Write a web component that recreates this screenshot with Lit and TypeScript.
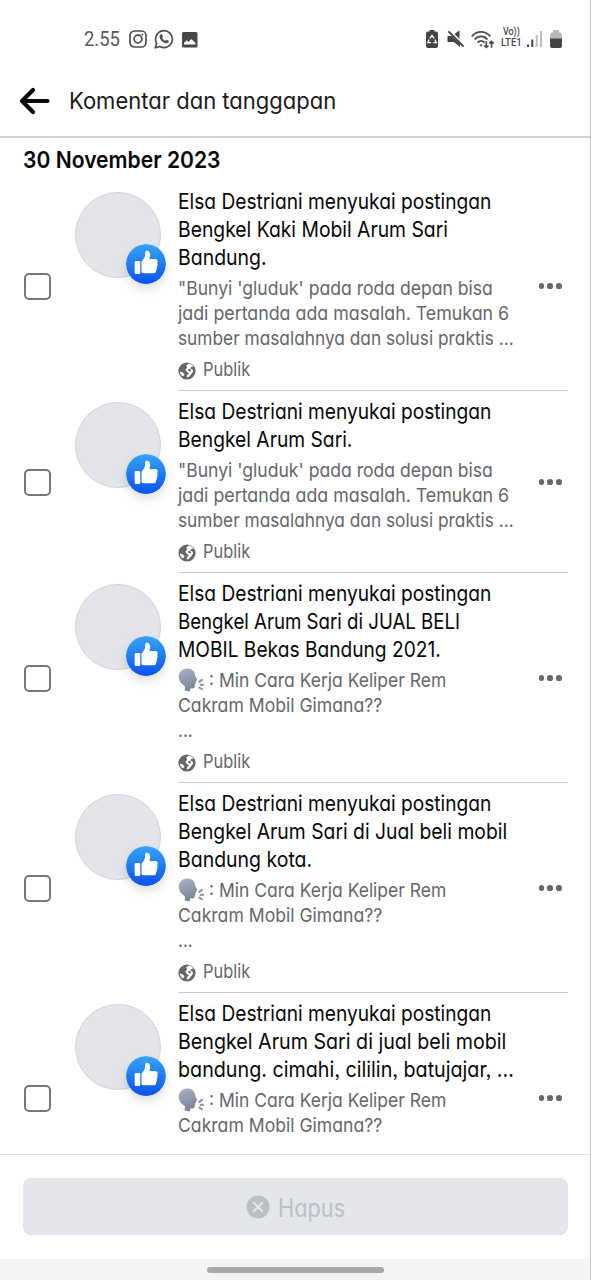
import { LitElement, html, css } from "lit";
import { customElement, property } from "lit/decorators.js";

/** A single line of text condensed horizontally to a given width. */
@customElement("fit-line")
class FitLine extends LitElement {
  @property({ type: Number }) w = 100;
  static styles = css`
    :host { display: block; white-space: nowrap; }
    .t { display: inline-block; transform-origin: 0 50%; white-space: pre; }
  `;
  updated() {
    const t = this.renderRoot.querySelector(".t") as HTMLElement;
    this.style.width = this.w + "px";
    t.style.transform = `scaleX(${this.w / t.offsetWidth})`;
  }
  render() {
    return html`<span class="t"><slot></slot></span>`;
  }
}

type Line = [string, number];
interface Activity { title: Line[]; body: Line[]; speaking?: boolean; privacy?: string; }

const FIRST: Line = ["Elsa Destriani menyukai postingan", 313.5];
const BUNYI: Line[] = [
  ["\"Bunyi 'gluduk' pada roda depan bisa", 315],
  ["jadi pertanda ada masalah. Temukan 6", 331],
  ["sumber masalahnya dan solusi praktis ...", 336],
];
const KELIPER: Line[] = [
  [": Min Cara Kerja Keliper Rem", 237],
  ["Cakram Mobil Gimana??", 204.5],
  ["...", 15],
];
const ITEMS: Activity[] = [
  { title: [FIRST, ["Bengkel Kaki Mobil Arum Sari", 269.5], ["Bandung.", 88.5]], body: BUNYI, privacy: "Publik" },
  { title: [FIRST, ["Bengkel Arum Sari.", 174]], body: BUNYI, privacy: "Publik" },
  { title: [FIRST, ["Bengkel Arum Sari di JUAL BELI", 282.5], ["MOBIL Bekas Bandung 2021.", 263]], body: KELIPER, speaking: true, privacy: "Publik" },
  { title: [FIRST, ["Bengkel Arum Sari di Jual beli mobil", 329.5], ["Bandung kota.", 134.5]], body: KELIPER, speaking: true, privacy: "Publik" },
  { title: [FIRST, ["Bengkel Arum Sari di jual beli mobil", 328], ["bandung. cimahi, cililin, batujajar, ...", 336]], body: KELIPER.slice(0, 2), speaking: true },
];

const head = html`<svg class="head" width="27" height="24" viewBox="0 0 27 24">
  <defs><linearGradient id="h" x1="0" y1="0" x2="0.3" y2="1"><stop offset="0" stop-color="#aab4c3"/><stop offset="1" stop-color="#79869b"/></linearGradient></defs>
  <path fill="url(#h)" d="M9 .5C14 .2 17.2 3.500 17.300 8l2 3.800c.3.7-.2 1.100-1.200 1.200v1.800l-1.300.8.8 1.200-.9.8c.2 1.800-.3 2.800-2 2.800l-2.200-.2-.8 3.300-5-.9.2-4.300C3 16 .8 12.800.7 8.800.7 4 4 .8 9 .5z"/>
  <path d="M21.300 13.900l2.500-1.900M22.700 16.900h2.300M21.300 19.600l2.700 1.500" stroke="#8d98a9" stroke-width="2.200" fill="none" stroke-linecap="round"/>
</svg>`;

const like = html`<svg class="like" width="40" height="40" viewBox="0 0 40 40">
  <defs><linearGradient id="g" x1="0" y1="0" x2="0" y2="1"><stop offset="0" stop-color="#35a4fa"/><stop offset="1" stop-color="#0a52ef"/></linearGradient></defs>
  <circle cx="20" cy="20" r="20" fill="url(#g)"/>
  <rect x="8.700" y="17" width="5.600" height="13" rx="1.300" fill="#fff"/>
  <path fill="#fff" d="M15.500 26.800V18.500c0-2.200 3.700-4 3.700-8.300V8.500c0-1.200.7-1.800 1.700-1.800 2.300 0 3.300 2 3.300 4.300 0 1.600-.5 3-.9 4h5.900c1.600 0 2.500 1 2.500 2.300 0 .9-.3 1.500-.6 1.900.4.4.6 1 .5 1.800-.1.900-.4 1.500-.8 1.800.2.500.2 1 .1 1.600-.1.800-.4 1.400-.8 1.600.1.300.1.700 0 1.200-.2 1.300-1.200 2.100-2.700 2.100h-8.400c-1.700 0-2.900-.2-3.500-1z"/>
</svg>`;

const globe = html`<svg width="18" height="18" viewBox="0 0 18 18">
  <circle cx="9" cy="9" r="8.600" fill="#65676b"/>
  <path fill="#fff" d="M8.200 3.300l3-1.700c2 .5 3.500 1.700 4.200 3l-2 .5-1.200 1.500 2.300.9.600 2-1.800 2.800-2.400 2.700-2.200.3.600-2.500 1.700-1.600-2-1.300-1.700-2.300 1.800-1.500-.300-1.300z"/>
  <path fill="#fff" d="M1.800 9.600l3 .8 1.600 1.700-.4 1.500-1.600.7C3 13 2 11.500 1.800 9.600z"/>
  <path fill="#65676b" d="M9.700 7.500l2.300-.6 1.300 1.300-1.100 1.400-1.700-.5z"/>
</svg>`;

@customElement("activity-row")
class ActivityRow extends LitElement {
  @property({ attribute: false }) item!: Activity;
  static styles = css`
    :host { display: flex; flex: none; box-sizing: border-box; padding: 0 22px 0 24px; }
    .check { align-self: center; flex: none; box-sizing: border-box; width: 27px; height: 27px; margin-top: 1px; border: 2px solid #75777a; border-radius: 5px; }
    .who { position: relative; flex: none; width: 86px; height: 86px; margin: 11px 17px 0 24px; }
    .avatar { box-sizing: border-box; width: 86px; height: 86px; border-radius: 50%; background: #e4e5ea; border: 1px solid #d2d3d7; }
    .like { position: absolute; left: 51px; top: 52px; border-radius: 50%; box-shadow: 0 5px 10px rgba(0, 0, 0, 0.13); }
    .main { flex: 1; display: flex; box-sizing: border-box; border-bottom: 1px solid #cbccce; padding: 5.500px 0 7.500px; }
    .cut { height: 210px; }
    .text { flex: 1; }
    .title { font-size: 22px; line-height: 28px; color: #080809; }
    .body { margin: 5.500px 0 7px; font-size: 19.200px; line-height: 25px; color: #65676b; }
    .row { display: flex; height: 25px; }
    .head { margin: 0 3.500px 0 0; }
    .privacy { display: flex; align-items: center; gap: 7px; font-size: 19px; line-height: 24.500px; color: #65676b; }
    .privacy svg { margin-top: 1px; }
    .dots { align-self: center; flex: none; display: flex; gap: 3.200px; padding-right: 6px; margin-top: 3px; }
    .dot { width: 5.700px; height: 5.700px; border-radius: 50%; background: #65676b; }
  `;
  render() {
    const { title, body, speaking, privacy } = this.item;
    return html`
      <div class="check"></div>
      <div class="who"><div class="avatar"></div>${like}</div>
      <div class="main ${privacy ? "" : "cut"}">
        <div class="text">
          <div class="title">${title.map(([t, w]) => html`<fit-line .w=${w}>${t}</fit-line>`)}</div>
          <div class="body">${body.map(([t, w], i) => html`<div class="row">${speaking && i === 0 ? head : ""}<fit-line .w=${w}>${t}</fit-line></div>`)}</div>
          ${privacy ? html`<div class="privacy">${globe}<fit-line .w=${47.5}>${privacy}</fit-line></div>` : ""}
        </div>
        <div class="dots"><div class="dot"></div><div class="dot"></div><div class="dot"></div></div>
      </div>`;
  }
}

@customElement("app-root")
class AppRoot extends LitElement {
  static styles = css`
    :host { display: flex; flex-direction: column; box-sizing: border-box; width: 591px; height: 1280px; overflow: hidden; background: #fff; border-right: 1px solid #c4c4c4; font-family: Inter, "Liberation Sans", sans-serif; font-feature-settings: "cv11", "ss03"; font-weight: 370; }
    .status { flex: none; height: 76px; box-sizing: border-box; padding: 0 28px 0 84px; display: flex; justify-content: space-between; }
    .left, .right { display: flex; align-items: center; height: 78px; }
    .left { font: 400 20.500px Roboto, sans-serif; color: #5a5a5a; }
    .ig { margin-left: 9px; }
    .wa { margin-left: 7px; }
    .im { margin-left: 7px; }
    .mute { margin-left: 9px; }
    .wifi { margin-left: 6px; }
    .volte { font: 500 11px/12px Roboto, sans-serif; color: #4b4b4b; margin: 0 5px 0 6px; display: grid; gap: 0; }
    .volte .a { margin: -3px 0 0 2px; }
    .volte .b { margin-top: -1px; }
    .battery { margin-left: 7px; }
    .bar { flex: none; height: 62px; box-sizing: border-box; display: flex; align-items: center; padding: 0 0 10px 19px; gap: 19px; border-bottom: 2px solid #cfcfcf; font-size: 23px; line-height: 28px; color: #1a1a1b; }
    .list { flex: 1; min-height: 0; overflow: hidden; display: flex; flex-direction: column; }
    .date { flex: none; height: 43px; padding-left: 23.500px; font-size: 23.500px; line-height: 44px; font-weight: 600; color: #080809; }
    .date fit-line { margin-left: -0.5px; }
    .foot { flex: none; height: 105px; box-sizing: border-box; border-top: 1.500px solid #dedfe1; padding: 23px 22px 0 23px; }
    .button { display: flex; align-items: center; justify-content: center; gap: 8px; height: 57px; border-radius: 8px; background: #e4e6eb; color: #bcc0c4; font-size: 25px; line-height: 30px; box-sizing: border-box; }
    .button fit-line { margin-top: 2px; }
    .nav { flex: none; height: 21px; background: #f4f4f4; display: flex; justify-content: center; padding-top: 8px; box-sizing: border-box; }
    .pill { width: 177px; height: 6px; border-radius: 3px; background: #a8a8a8; }
  `;
  render() {
    return html`
      <div class="status">
        <div class="left">
          <fit-line .w=${36}>2.55</fit-line>
          <svg class="ig" width="18" height="18" viewBox="0 0 18 18" fill="none" stroke="#4e4e4e" stroke-width="1.700"><rect x="1" y="1" width="16" height="16" rx="4.500"/><circle cx="9" cy="9" r="3.900"/><circle cx="13.400" cy="4.600" r=".6" fill="#4e4e4e" stroke-width=".9"/></svg>
          <svg class="wa" width="20" height="20" viewBox="0 0 20 20"><path d="M1.300 18.800l1.300-4.600a8.400 8.400 0 1 1 3.300 3.300z" fill="none" stroke="#4e4e4e" stroke-width="1.700" stroke-linejoin="round"/><path fill="#4e4e4e" d="M6.700 5.400c.5-.5 1.200-.4 1.400.1l.8 1.900c.1.400-.6 1-.8 1.300.6 1.400 1.700 2.400 3.200 3.100.4-.3.900-1.200 1.300-1l2 1c.5.300.2 1.300-.3 1.800-1 .9-2.300.9-3.700.3-2.200-1-3.900-2.700-4.700-4.700-.5-1.400-.2-2.900.8-3.800z"/></svg>
          <svg class="im" width="17" height="17" viewBox="0 0 17 17"><rect x="1" y="1" width="15.500" height="15.500" rx="1.500" fill="#474747"/><path fill="#fff" d="M3 13.500V12l2.700-2.700L7.500 11l2.800-3L14.500 12v1.500z"/></svg>
        </div>
        <div class="right">
          <svg width="12" height="18" viewBox="0 0 12 18"><path fill="#444" d="M3.500 0h5v1.500H10a2 2 0 0 1 2 2V16a2 2 0 0 1-2 2H2a2 2 0 0 1-2-2V3.500a2 2 0 0 1 2-2h1.500z"/><path d="M3.900 8.300L6 5.300l2.100 3M9 9.500l1.200 3.200H7.300M5 12.700H1.800L3 9.500" fill="none" stroke="#fff" stroke-width="1.300"/></svg>
          <svg class="mute" width="18" height="18" viewBox="0 0 18 18"><path fill="#444" d="M.5 6h4.200L13 14v3L6.800 12H.5zM6.500 4.700L12.500.300V9.800z"/><path d="M3.300 1l14.500 14" stroke="#fff" stroke-width="1.500"/><path d="M1.500 1.300l15 15.200" stroke="#444" stroke-width="1.900"/></svg>
          <svg class="wifi" width="24" height="19" viewBox="0 0 24 19" fill="none" stroke="#4a4a4a" stroke-width="1.800"><path d="M.8 6.300c5-6 13.500-6 18.500 0M3.700 9.500c3.600-4.200 9.200-4.200 12.800 0M6.600 12.600c2-2.300 5-2.300 7 0"/><circle cx="10" cy="15.300" r="1.100" fill="#4a4a4a" stroke="none"/><path d="M15.300 11v6.500m-2.200-2l2.200 2 2.200-2M20.500 17.800v-6.500m-2.200 2l2.200-2 2.200 2" stroke-width="1.600"/></svg>
          <div class="volte"><fit-line class="a" .w=${17}>Vo))</fit-line><fit-line class="b" .w=${21}>LTE1</fit-line></div>
          <svg width="16" height="17" viewBox="0 0 16 17"><path fill="#444" d="M0 13.500h2V16H0zM4.300 8.500h2V16h-2z"/><path fill="#bcbcbc" d="M8.700 4h2v12h-2zM13 0h2v16h-2z"/></svg>
          <svg class="battery" width="12" height="18" viewBox="0 0 12 18"><path fill="#b9b9b9" d="M3 0h6v2.500h1A2 2 0 0 1 12 4.500V9H0V4.500a2 2 0 0 1 2-2h1z"/><path fill="#444" d="M0 8.500h12V16a2 2 0 0 1-2 2H2a2 2 0 0 1-2-2z"/></svg>
        </div>
      </div>
      <div class="bar">
        <svg width="31" height="28" viewBox="0 0 31 28"><path d="M14 3L3 14l11 11M3 14h25.500" fill="none" stroke="#080809" stroke-width="4.200" stroke-linecap="round" stroke-linejoin="round"/></svg>
        <fit-line .w=${267}>Komentar dan tanggapan</fit-line>
      </div>
      <div class="list">
        <div class="date"><fit-line .w=${197.5}>30 November 2023</fit-line></div>
        ${ITEMS.map((i) => html`<activity-row .item=${i}></activity-row>`)}
      </div>
      <div class="foot">
        <div class="button">
          <svg width="24" height="24" viewBox="0 0 24 24"><circle cx="12" cy="12" r="11.500" fill="#bcc0c4"/><path d="M8 8l8 8M16 8l-8 8" stroke="#e4e6eb" stroke-width="2.200" stroke-linecap="round"/></svg>
          <fit-line .w=${67}>Hapus</fit-line>
        </div>
      </div>
      <div class="nav"><div class="pill"></div></div>`;
  }
}
